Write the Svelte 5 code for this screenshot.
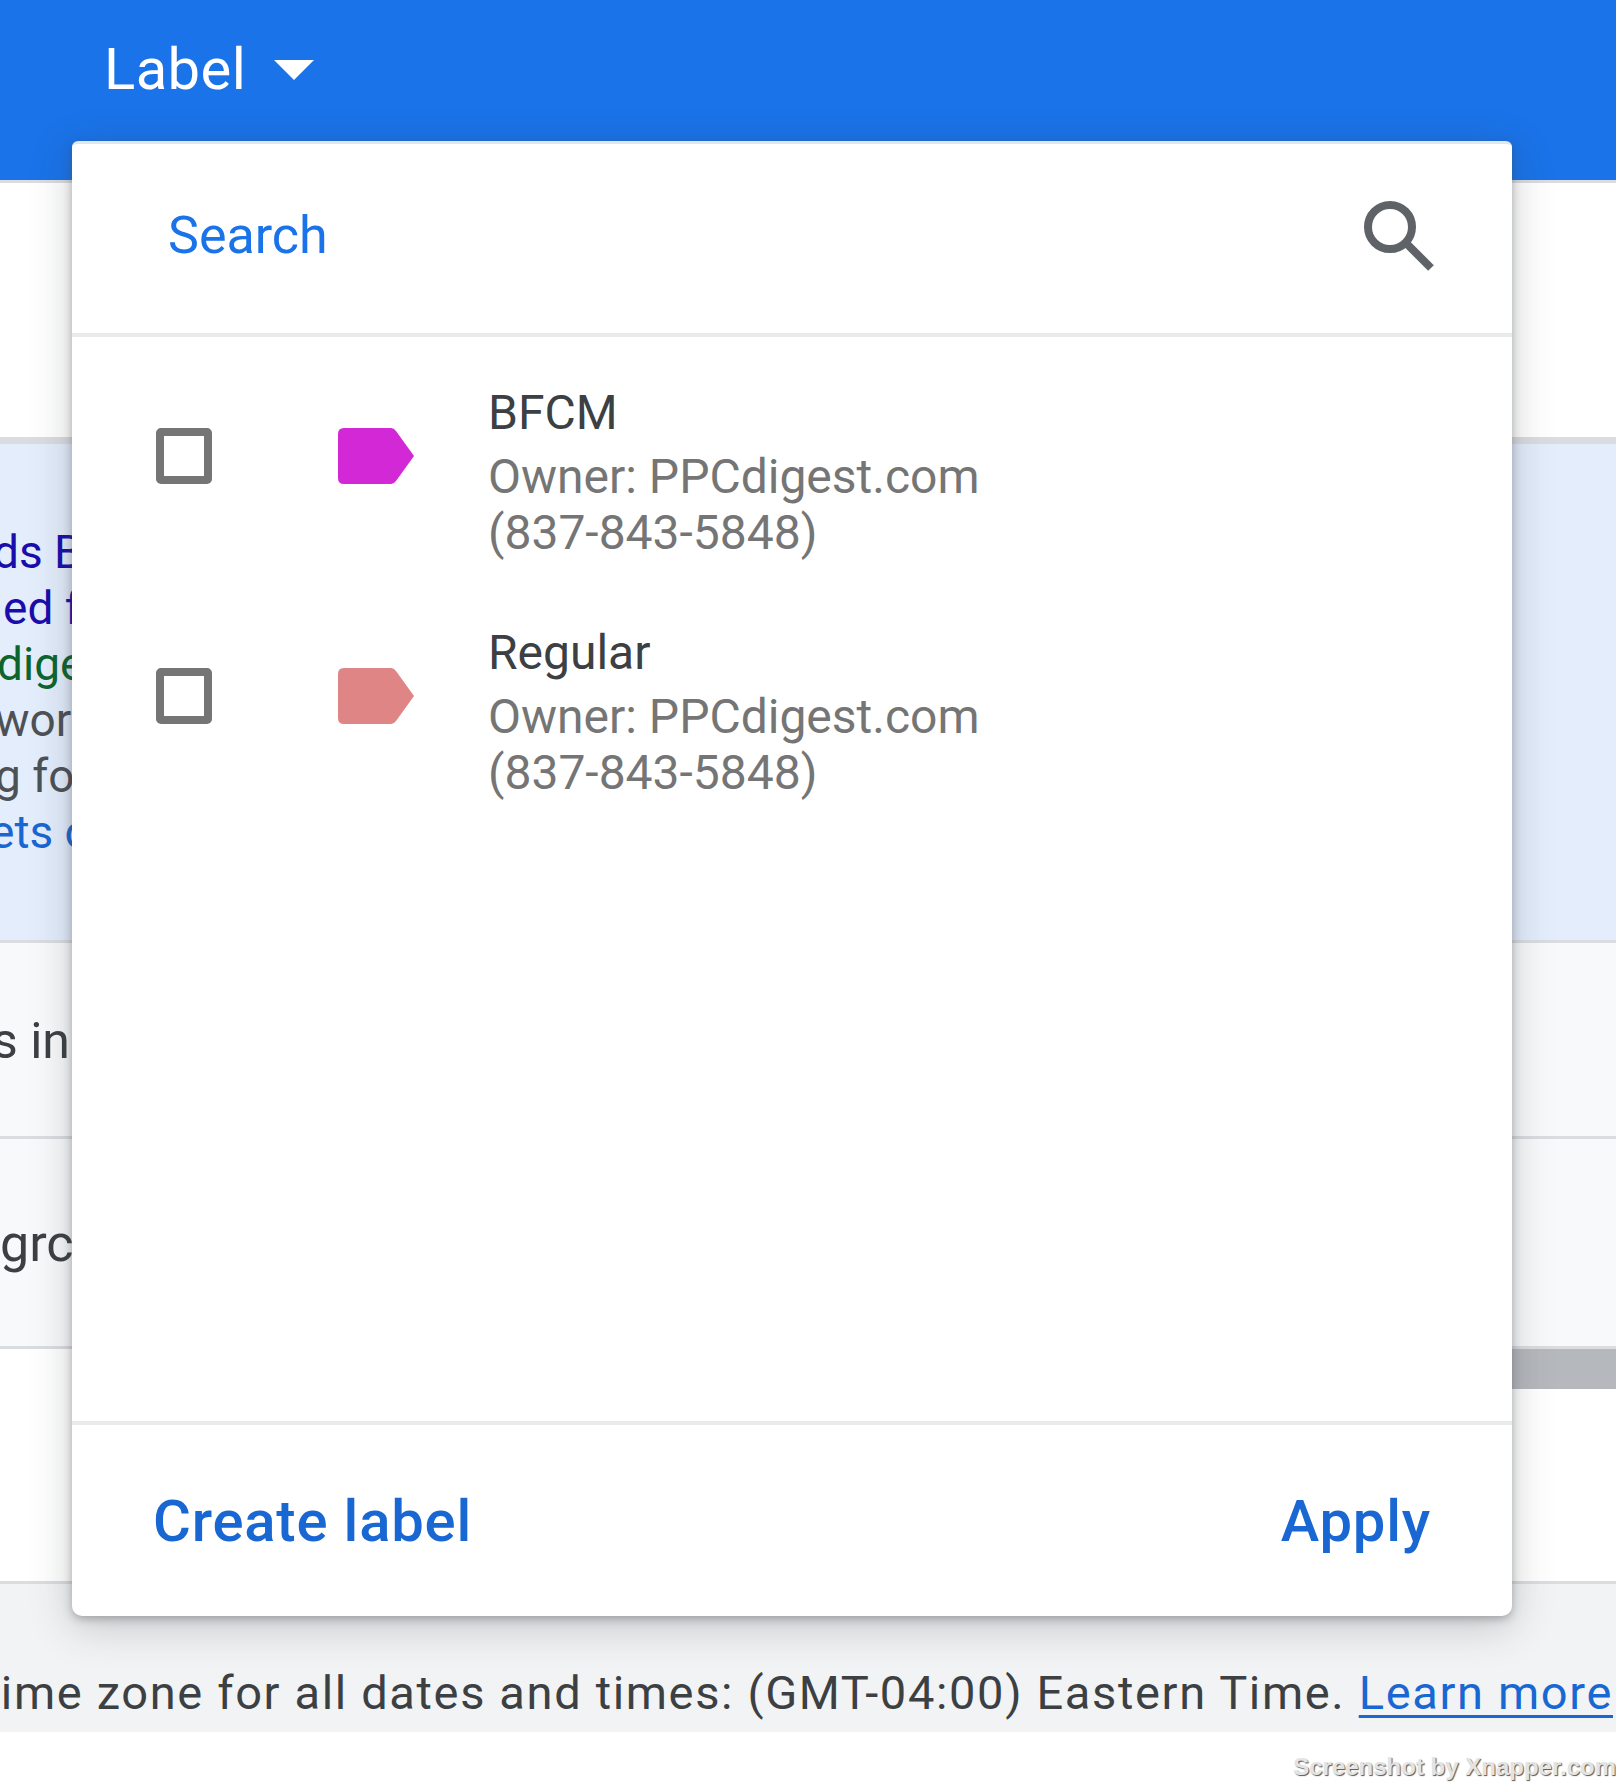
<script>
  const labels = [
    { name: "BFCM", owner: "Owner: PPCdigest.com", phone: "(837-843-5848)", color: "#d328d6" },
    { name: "Regular", owner: "Owner: PPCdigest.com", phone: "(837-843-5848)", color: "#e08585" }
  ];

  // ad preview lines, cut off by the popup
  const adLines = [
    { text: "ds Black Friday", cls: "ad-title", shift: -7 },
    { text: "ed for you", cls: "ad-title", shift: 3 },
    { text: "digest.com", cls: "ad-url", shift: -3 },
    { text: "words that work", cls: "ad-desc", shift: -5 },
    { text: "g for clicks", cls: "ad-desc", shift: -5 },
    { text: "ets of the ad", cls: "ad-link", shift: -10 }
  ];
</script>

<div class="page">
  <header class="topbar">
    <span class="topbar-title">Label</span>
    <svg class="caret" width="40" height="20" viewBox="0 0 40 20"><path d="M0 0H40L20 20Z" fill="#fff" /></svg>
  </header>

  <div class="blank"></div>

  <section class="ad">
    {#each adLines as line}
      <div class={line.cls} style="margin-left: {line.shift}px">{line.text}</div>
    {/each}
  </section>

  <div class="row row-a"><span>s in the campaign</span></div>
  <div class="row row-b"><span>grc</span></div>

  <div class="bottom">
    <div class="scrollbar"></div>
  </div>

  <footer class="timezone">
    <span>Time zone for all dates and times: (GMT-04:00) Eastern Time. <a href="#top">Learn more</a></span>
  </footer>

  <div class="watermark">Screenshot by Xnapper.com</div>

  <!-- Label popup -->
  <div class="popup">
    <div class="search">
      <span class="search-text">Search</span>
      <svg width="80" height="80" viewBox="0 0 80 80" fill="none" stroke="#5f6368" stroke-width="8">
        <circle cx="32" cy="31" r="22" />
        <path d="M48 47L73 72" />
      </svg>
    </div>

    <ul class="list">
      {#each labels as label}
        <li class="item">
          <span class="checkbox"></span>
          <svg class="tag" width="76" height="56" viewBox="0 0 76 56">
            <path d="M6 0H53Q56 0 58 3L76 28L58 53Q56 56 53 56H6Q0 56 0 50V6Q0 0 6 0Z" fill={label.color} />
          </svg>
          <div class="info">
            <div class="name">{label.name}</div>
            <div class="owner">{label.owner}</div>
            <div class="owner">{label.phone}</div>
          </div>
        </li>
      {/each}
    </ul>

    <div class="actions">
      <button class="action">Create label</button>
      <button class="action">Apply</button>
    </div>
  </div>
</div>

<style>
  :global(body) {
    margin: 0;
    background: #fff;
  }

  .page {
    position: relative;
    width: 1616px;
    height: 1782px;
    overflow: hidden;
    font-family: Roboto, "Liberation Sans", sans-serif;
    background: #fff;
  }

  .topbar {
    box-sizing: border-box;
    height: 183px;
    padding: 32px 0 0 104px;
    display: flex;
    align-items: flex-start;
    gap: 28px;
    background: #1a73e8;
    border-bottom: 3px solid #dadce0;
    color: #fff;
  }

  .topbar-title {
    font-size: 58px;
    line-height: 74px;
    letter-spacing: 0.4px;
  }

  .caret {
    margin-top: 28px;
  }

  .blank {
    height: 254px;
    background: #fff;
  }

  .ad {
    box-sizing: border-box;
    height: 506px;
    padding-top: 80px;
    background: #e3edfc;
    border-top: 7px solid #dadce0;
    border-bottom: 3px solid #dadce0;
    font-size: 46px;
    line-height: 56px;
    white-space: nowrap;
  }

  .ad-title { color: #1a0dab; }
  .ad-url { color: #0d652d; }
  .ad-desc { color: #4d5156; }
  .ad-link { color: #1967d2; }

  .row {
    box-sizing: border-box;
    background: #f8f9fa;
    border-bottom: 3px solid #dadce0;
    font-size: 50px;
    color: #3c4043;
    white-space: nowrap;
  }

  .row-a {
    height: 196px;
    padding: 68px 0 0 0;
    line-height: 60px;
    text-indent: -8px;
  }

  .row-b {
    height: 210px;
    padding: 75px 0 0 0;
    font-size: 52px;
    line-height: 60px;
  }

  .bottom {
    box-sizing: border-box;
    height: 235px;
    background: #fff;
    border-bottom: 3px solid #dadce0;
  }

  /* only shows right of the popup */
  .scrollbar {
    height: 40px;
    margin-left: 800px;
    background: #b5b8bd;
  }

  .timezone {
    box-sizing: border-box;
    height: 148px;
    padding: 81px 3px 0 0;
    display: flex;
    justify-content: flex-end;
    background: #f1f3f4;
    font-size: 47px;
    line-height: 56px;
    letter-spacing: 1.65px;
    color: #3c4043;
    white-space: nowrap;
  }

  .timezone a {
    color: #1967d2;
    text-underline-offset: 6px;
    text-decoration-thickness: 3px;
  }

  .watermark {
    position: absolute;
    right: 0;
    bottom: 0;
    font-family: "Liberation Sans", sans-serif;
    font-size: 24px;
    font-weight: 700;
    line-height: 30px;
    color: #e4e4e4;
    text-shadow: 1px 1px 1px #555;
    white-space: nowrap;
  }

  .popup {
    position: absolute;
    top: 141px;
    left: 72px;
    width: 1440px;
    height: 1475px;
    display: flex;
    flex-direction: column;
    box-sizing: border-box;
    background: #fff;
    border-top: 3px solid #e4e6ee;
    border-radius: 6px 6px 10px 10px;
    box-shadow: 0 3px 8px rgba(60, 64, 67, 0.35), 0 10px 40px rgba(60, 64, 67, 0.25);
  }

  .search {
    box-sizing: border-box;
    height: 193px;
    padding: 0 74px 6px 96px;
    display: flex;
    align-items: center;
    justify-content: space-between;
    border-bottom: 4px solid #e8eaed;
  }

  .search-text {
    font-size: 52px;
    color: #1a73e8;
  }

  .list {
    flex: 1;
    margin: 0;
    padding: 48px 0 0 84px;
    list-style: none;
  }

  .item {
    display: flex;
    align-items: flex-start;
    height: 240px;
  }

  .checkbox {
    box-sizing: border-box;
    width: 56px;
    height: 56px;
    margin: 43px 126px 0 0;
    border: 8px solid #757575;
    border-radius: 5px;
  }

  .tag {
    margin: 43px 74px 0 0;
  }

  .info {
    line-height: 56px;
  }

  .name {
    margin-bottom: 8px;
    font-size: 48px;
    color: #3c4043;
  }

  .owner {
    font-size: 48px;
    color: #757575;
  }

  .actions {
    box-sizing: border-box;
    height: 195px;
    padding: 0 81px 0 81px;
    display: flex;
    align-items: center;
    justify-content: space-between;
    border-top: 4px solid #e8eaed;
  }

  .action {
    padding: 0;
    border: none;
    background: none;
    font-family: Roboto, "Liberation Sans", sans-serif;
    font-size: 58px;
    font-weight: 500;
    letter-spacing: 0.8px;
    color: #1967d2;
    cursor: pointer;
  }
</style>
